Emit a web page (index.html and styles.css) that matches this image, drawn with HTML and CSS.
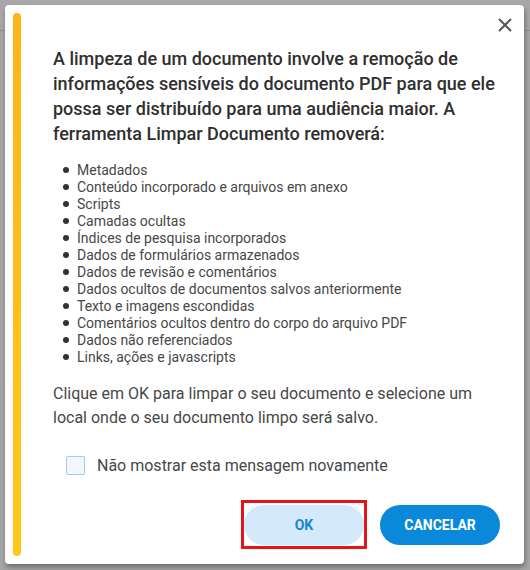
FILE: index.html
```html
<!DOCTYPE html>
<html lang="pt">
<head>
    <meta charset="UTF-8">
    <meta name="viewport" content="width=device-width, initial-scale=1.0">
    <title>Limpar Documento</title>
    <link rel="stylesheet" href="styles.css">
</head>
<body>
    <div class="dialog">
        <div class="accent"></div>
        <div class="content">
            <div class="header">
                <button class="close" aria-label="Fechar">
                    <svg width="14" height="14" viewBox="0 0 14 14">
                        <path d="M1 1 L13 13 M13 1 L1 13" stroke="#555" stroke-width="2" fill="none"/>
                    </svg>
                </button>
            </div>

            <p class="lead">A limpeza de um documento involve a remoção de informações sensíveis do documento PDF para que ele possa ser distribuído para uma audiência maior. A ferramenta Limpar Documento removerá:</p>

            <ul class="items">
                <li>Metadados</li>
                <li>Conteúdo incorporado e arquivos em anexo</li>
                <li>Scripts</li>
                <li>Camadas ocultas</li>
                <li>Índices de pesquisa incorporados</li>
                <li>Dados de formulários armazenados</li>
                <li>Dados de revisão e comentários</li>
                <li>Dados ocultos de documentos salvos anteriormente</li>
                <li>Texto e imagens escondidas</li>
                <li>Comentários ocultos dentro do corpo do arquivo PDF</li>
                <li>Dados não referenciados</li>
                <li>Links, ações e javascripts</li>
            </ul>

            <p class="note">Clique em OK para limpar o seu documento e selecione um local onde o seu documento limpo será salvo.</p>

            <label class="check">
                <span class="box"></span>
                Não mostrar esta mensagem novamente
            </label>

            <div class="actions">
                <span class="focus-ring"><button class="button light">OK</button></span>
                <button class="button">CANCELAR</button>
            </div>
        </div>
    </div>
</body>
</html>
```

FILE: styles.css
```css
body {
    margin: 0;
    height: 570px;
    font-family: Roboto, "Liberation Sans", sans-serif;
    background: linear-gradient(to bottom, #a7a7a7 0, #a7a7a7 30px, #8e8e8e 30px, #8e8e8e 31px, #a5a5a5 31px);
    overflow: hidden;
}
.dialog {
    display: flex;
    box-sizing: border-box;
    width: 519px;
    height: 559px;
    margin: 5px;
    padding: 8px;
    background: white;
    border-radius: 4px;
    box-shadow: 1px 3px 5px rgba(0, 0, 0, 0.35);
}
.accent {
    width: 8px;
    flex-shrink: 0;
    border-radius: 4px;
    background: linear-gradient(to bottom, #fdb515, #ffc71c);
}
.content {
    flex: 1;
    display: flex;
    flex-direction: column;
    margin-left: 32px;
    padding-right: 16px;
}
.header {
    display: flex;
    justify-content: flex-end;
    height: 33px;
    margin-right: -12px;
}
.close {
    width: 14px;
    height: 14px;
    margin-top: 5px;
    padding: 0;
    border: none;
    background: none;
    cursor: pointer;
}
.close svg {
    display: block;
}
.lead {
    margin: 0;
    font-size: 18px;
    font-weight: 500;
    line-height: 25px;
    color: #2f2f2f;
}
.items {
    margin: 16px 0 0 0;
    padding-left: 10px;
    list-style: none;
    font-size: 14px;
    line-height: 17px;
    color: #474747;
}
.items li::before {
    content: "";
    display: inline-block;
    width: 6px;
    height: 6px;
    margin-right: 8px;
    border-radius: 50%;
    background: #333;
    vertical-align: 2px;
}
.note {
    margin: 16px 0 0 0;
    font-size: 16px;
    line-height: 24px;
    color: #474747;
}
.check {
    display: flex;
    align-items: center;
    gap: 12px;
    margin: 26px 0 0 13px;
    font-size: 16px;
    line-height: 19px;
    color: #474747;
}
.box {
    width: 17px;
    height: 17px;
    border: 1px solid #9fcdf1;
    border-radius: 2px;
    background: #f1f7fd;
}
.actions {
    display: flex;
    justify-content: flex-end;
    align-items: center;
    gap: 13px;
    margin-top: 25px;
}
.focus-ring {
    display: flex;
    padding: 2px 0 1px 0;
    border: 3px solid #e4141b;
}
.button {
    width: 120px;
    height: 40px;
    border: none;
    border-radius: 20px;
    background: #0a88da;
    color: white;
    font-family: Roboto, "Liberation Sans", sans-serif;
    font-size: 14px;
    font-weight: 700;
    cursor: pointer;
}
.button.light {
    background: #d4e9fb;
    color: #1685d6;
}
```
